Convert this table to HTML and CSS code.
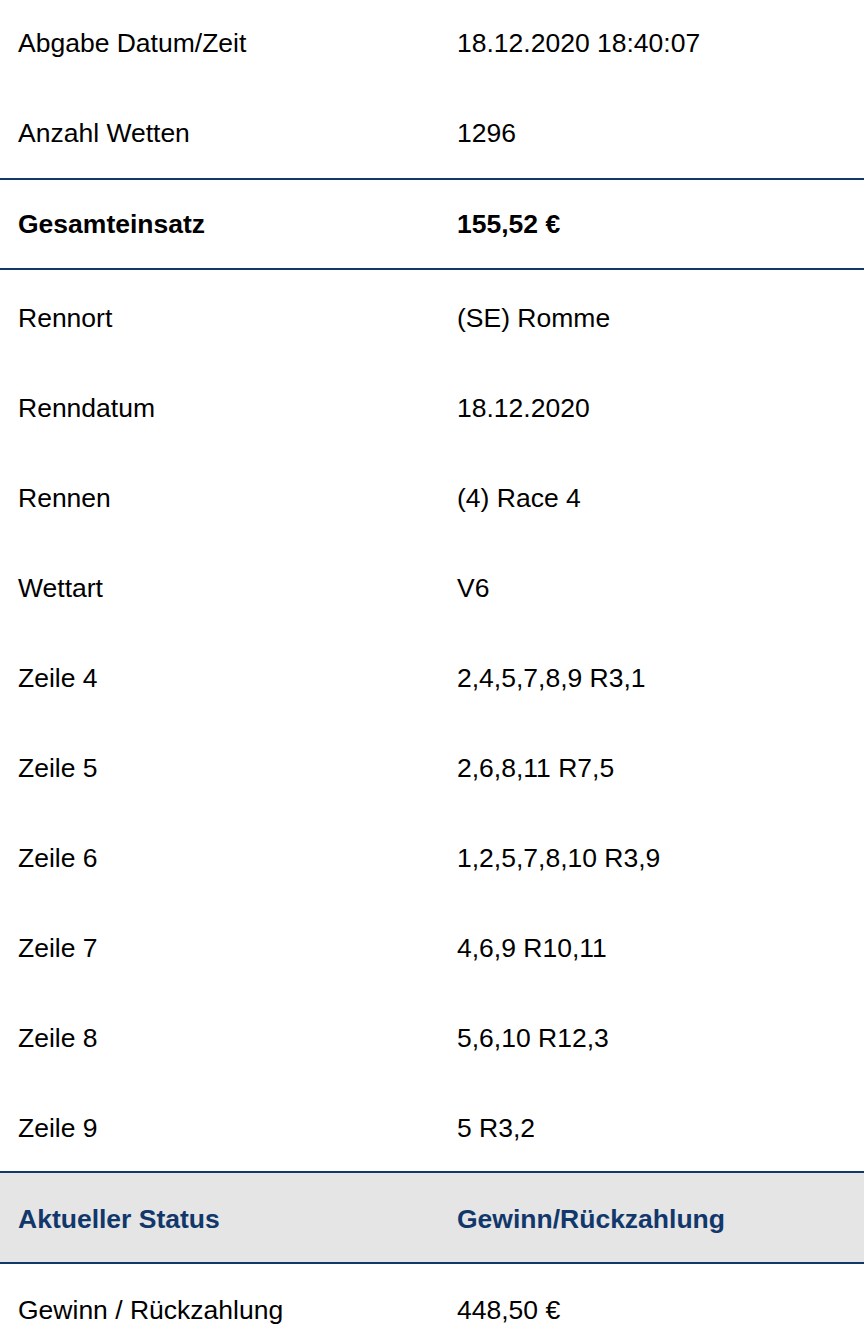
FILE: index.html
```html
<!DOCTYPE html>
<html lang="de">
<head>
<meta charset="utf-8">
<title>Wettschein</title>
<link rel="stylesheet" href="styles.css">
</head>
<body>
<div class="sheet">
  <div class="row first"><div class="label">Abgabe Datum/Zeit</div><div class="value">18.12.2020 18:40:07</div></div>
  <div class="row second"><div class="label">Anzahl Wetten</div><div class="value">1296</div></div>
  <div class="row total"><div class="label">Gesamteinsatz</div><div class="value">155,52 €</div></div>
  <div class="row after-total"><div class="label">Rennort</div><div class="value">(SE) Romme</div></div>
  <div class="row"><div class="label">Renndatum</div><div class="value">18.12.2020</div></div>
  <div class="row"><div class="label">Rennen</div><div class="value">(4) Race 4</div></div>
  <div class="row"><div class="label">Wettart</div><div class="value">V6</div></div>
  <div class="row"><div class="label">Zeile 4</div><div class="value">2,4,5,7,8,9 R3,1</div></div>
  <div class="row"><div class="label">Zeile 5</div><div class="value">2,6,8,11 R7,5</div></div>
  <div class="row"><div class="label">Zeile 6</div><div class="value">1,2,5,7,8,10 R3,9</div></div>
  <div class="row"><div class="label">Zeile 7</div><div class="value">4,6,9 R10,11</div></div>
  <div class="row"><div class="label">Zeile 8</div><div class="value">5,6,10 R12,3</div></div>
  <div class="row"><div class="label">Zeile 9</div><div class="value">5 R3,2</div></div>
  <div class="row status-head"><div class="label">Aktueller Status</div><div class="value">Gewinn/Rückzahlung</div></div>
  <div class="row"><div class="label">Gewinn / Rückzahlung</div><div class="value">448,50 €</div></div>
</div>
</body>
</html>
```

FILE: styles.css
```css
html, body {
  margin: 0;
  padding: 0;
  background: #ffffff;
}

body {
  font-family: "Liberation Sans", Arial, Helvetica, sans-serif;
  font-size: 26.5px;
  color: #000000;
}

.sheet {
  display: flex;
  flex-direction: column;
  width: 864px;
}

.row {
  display: grid;
  grid-template-columns: 439px 1fr;
  align-items: center;
  height: 90px;
  padding-top: 2px;
  box-sizing: border-box;
}

.row.first {
  height: 86px;
  padding-top: 0;
}

.row.second {
  height: 92px;
  padding-top: 2px;
}

.label {
  padding-left: 18px;
}

.value {
  padding-left: 18px;
}

.row.total {
  font-weight: bold;
  border-top: 2px solid #12386b;
  border-bottom: 2px solid #12386b;
  height: 92px;
  padding-top: 0;
}

.row.after-total {
  padding-top: 4px;
  height: 92px;
}

.row.status-head {
  background: #e5e5e5;
  color: #12386b;
  font-weight: bold;
  border-top: 2px solid #12386b;
  border-bottom: 2px solid #12386b;
  height: 93px;
  padding-top: 3px;
  margin-top: -1px;
}
```
